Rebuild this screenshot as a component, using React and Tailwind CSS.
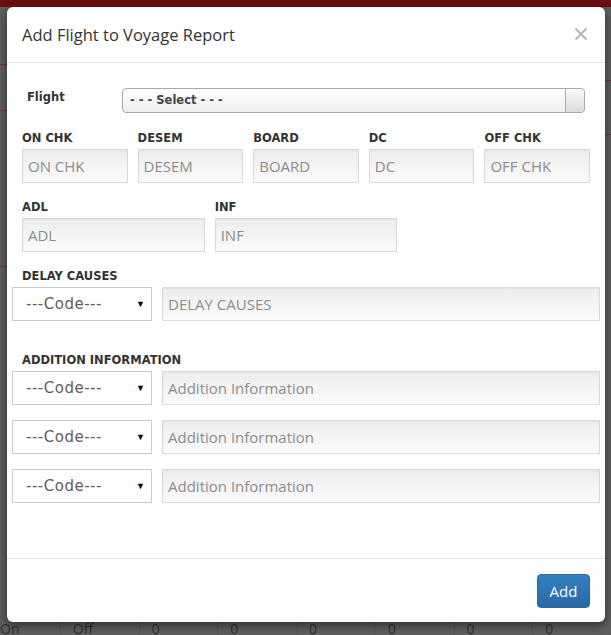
import React from 'react';

const font = { fontFamily: '"Open Sans", "Liberation Sans", sans-serif' };
const labelFont = { fontFamily: '"DejaVu Sans", Verdana, sans-serif' };

const TextBox = ({ placeholder }) => (
	<div className="h-[34px] border border-[#dadada] bg-gradient-to-b from-[#ededed] to-[#fbfbfb] shadow-[inset_0_1px_2px_rgba(0,0,0,0.05)] flex items-center px-[5px] text-[15px] text-[#8c8c8c]">
		{placeholder}
	</div>
);

const CodeSelect = () => (
	<div className="w-[140px] h-[34px] shrink-0 border border-[#cccccc] bg-white flex items-center justify-between pl-[13px] pr-[6px] text-[#606060]">
		<span className="text-[15px] tracking-[0.5px]" style={labelFont}>---Code---</span>
		<span className="text-[9px] text-black">▼</span>
	</div>
);

const CodeRow = ({ placeholder }) => (
	<div className="flex items-center gap-[10px] pl-[5px] pr-[5px]">
		<CodeSelect />
		<div className="flex-1">
			<TextBox placeholder={placeholder} />
		</div>
	</div>
);

const Label = ({ children }) => (
	<div className="text-[11.5px] font-bold text-[#333] leading-[15px] pt-[1px]" style={labelFont}>{children}</div>
);

const App = () => {
	const topFields = ['ON CHK', 'DESEM', 'BOARD', 'DC', 'OFF CHK'];
	const bottomCells = ['On', 'Off', '0', '0', '0', '0', '0', '0'];

	return (
		<div className="relative w-[611px] h-[635px] bg-[#5d5d5d] overflow-hidden" style={font}>
			{/* page behind the overlay */}
			<div className="h-[7px] bg-[#6a0f0f]" />
			<div className="absolute left-0 top-[64px] w-[7px] h-px bg-[#7a2a2a]" />
			<div className="absolute left-0 top-[110px] w-[7px] h-px bg-[#7a2a2a]" />
			<div className="absolute left-0 top-[266px] w-[7px] h-px bg-[#7a2a2a]" />
			<div className="absolute right-0 top-[80px] w-[6px] h-px bg-[#7a2a2a]" />
			<div className="absolute right-0 top-[134px] w-[6px] h-px bg-[#7a2a2a]" />
			<div className="absolute left-0 top-[622px] w-full flex text-[14px] text-[#2e2e2e] leading-[13px]">
				{bottomCells.map((c, i) => (
					<div key={i} className={i === 0 ? 'w-[60px] pl-0' : 'w-[79px] pl-[12px] border-l border-[#555]'}>
						{c}
					</div>
				))}
			</div>

			{/* modal */}
			<div className="absolute left-[7px] top-[7px] w-[598px] h-[615px] bg-white rounded-[6px] shadow-[0_3px_9px_rgba(0,0,0,0.5)] flex flex-col">
				<div className="h-[56px] flex items-center justify-between pl-[15px] pr-[17px] border-b border-[#e5e5e5]">
					<h4 className="text-[16.5px] text-[#333] pt-[1px]">Add Flight to Voyage Report</h4>
					<svg width="14" height="14" viewBox="0 0 14 14" className="mb-[1px]">
						<path d="M1.5 1.5 L12.5 12.5 M12.5 1.5 L1.5 12.5" stroke="#b3b3b3" strokeWidth="1.8" />
					</svg>
				</div>

				<div className="flex-1">
					<div className="flex items-start mt-[25px] pl-[20px]">
						<div className="w-[95px] text-[11.5px] font-bold text-[#333] pt-[1px]" style={labelFont}>Flight</div>
						<div className="w-[463px] h-[25px] rounded-[4px] border border-[#aaaaaa] bg-gradient-to-b from-white to-[#eeeeee] flex">
							<div className="flex-1 flex items-center pl-[7px] text-[11.5px] font-bold text-[#444]" style={labelFont}>- - - Select - - -</div>
							<div className="w-[19px] border-l border-[#aaaaaa] bg-gradient-to-b from-[#fafafa] to-[#dddddd] rounded-r-[4px]" />
						</div>
					</div>

					<div className="grid grid-cols-5 ml-[10px] w-[578px] mt-[17px]">
						{topFields.map((f) => (
							<div key={f} className="px-[5px]">
								<Label>{f}</Label>
								<div className="mt-[3px]">
									<TextBox placeholder={f} />
								</div>
							</div>
						))}
					</div>

					<div className="grid grid-cols-3 ml-[10px] w-[578px] mt-[16px]">
						{['ADL', 'INF'].map((f) => (
							<div key={f} className="px-[5px]">
								<Label>{f}</Label>
								<div className="mt-[3px]">
									<TextBox placeholder={f} />
								</div>
							</div>
						))}
					</div>

					<div className="mt-[16px] pl-[15px]">
						<Label>DELAY CAUSES</Label>
					</div>
					<div className="mt-[3px]">
						<CodeRow placeholder="DELAY CAUSES" />
					</div>

					<div className="mt-[31px] pl-[15px]">
						<Label>ADDITION INFORMATION</Label>
					</div>
					<div className="mt-[3px] flex flex-col gap-[15px]">
						<CodeRow placeholder="Addition Information" />
						<CodeRow placeholder="Addition Information" />
						<CodeRow placeholder="Addition Information" />
					</div>
				</div>

				<div className="h-[64px] border-t border-[#e5e5e5] flex items-start justify-end pt-[15px] pr-[15px]">
					<button className="w-[53px] h-[34px] rounded-[4px] border border-[#2b679e] bg-gradient-to-b from-[#3380c2] to-[#2a69a6] text-white text-[15px]">
						Add
					</button>
				</div>
			</div>
		</div>
	);
};

export default App;
